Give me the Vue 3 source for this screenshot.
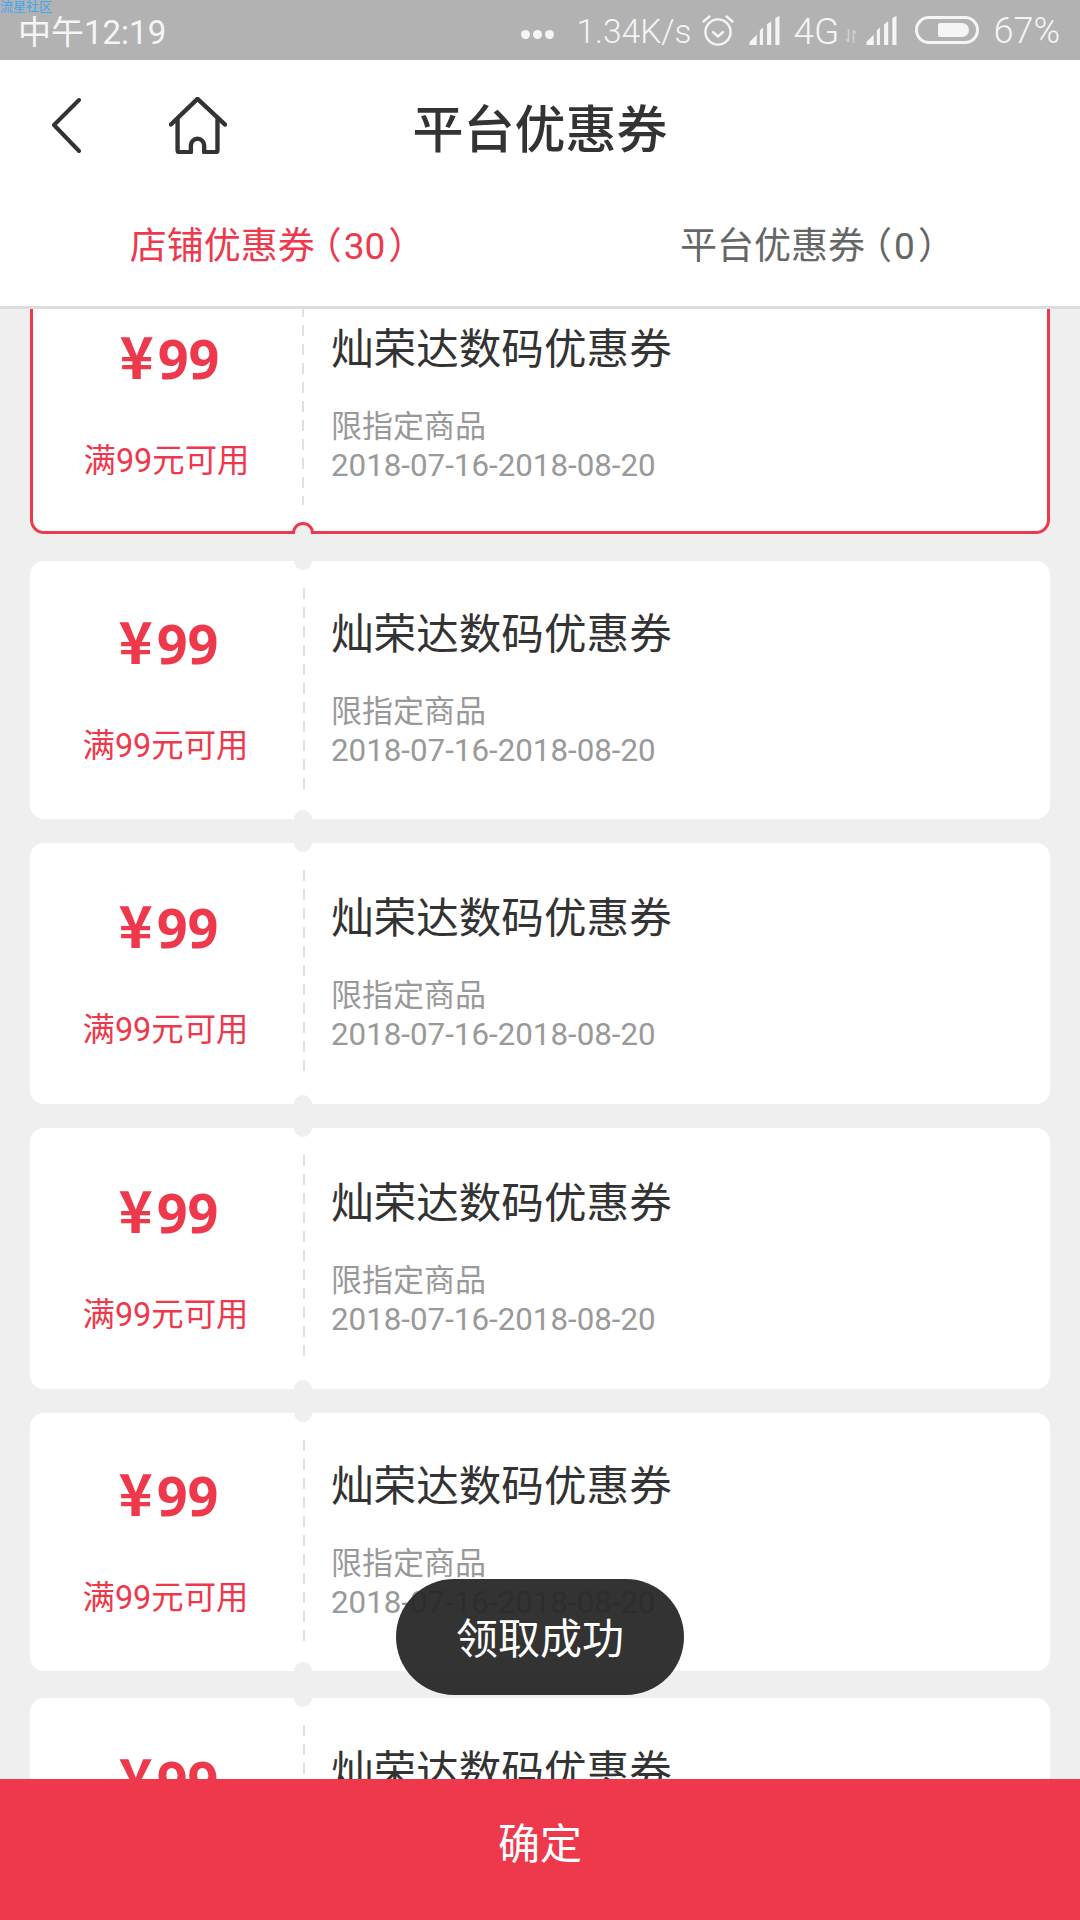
<template>
  <div class="page">
    <div class="status-bar">
      <span class="watermark">流星社区</span>
      <span class="clock">中午12:19</span>
      <div class="status-right">
        <span class="dots"><i></i><i></i><i></i></span>
        <span class="speed">1.34K/s</span>
        <svg class="alarm" width="34" height="34" viewBox="0 0 34 34" fill="none" stroke="#f5f5f5" stroke-width="2.4" stroke-linecap="round" stroke-linejoin="round">
          <circle cx="17" cy="19" r="12.6" />
          <path d="M12 19l5 4.500 5-4.500" />
          <path d="M2.500 8.500l6-5M31.500 8.500l-6-5" />
        </svg>
        <svg class="signal" width="34" height="29" viewBox="0 0 32 28" fill="#f5f5f5">
          <path d="M1 28v-3l7-7v10zM11 28V14l3-3v17zM18 28V8l4-3v23zM26 28V2l4-2v28z" />
        </svg>
        <span class="net">4G</span>
        <svg class="updown" width="12" height="14" viewBox="0 0 12 14" fill="none" stroke="#cfcfcf" stroke-width="1.600">
          <path d="M3.500 0v13M1 10l2.500 3M8.500 14V1M11 4L8.500 1" />
        </svg>
        <svg class="signal" width="34" height="29" viewBox="0 0 32 28" fill="#f5f5f5">
          <path d="M1 28v-3l7-7v10zM11 28V14l3-3v17zM18 28V8l4-3v23zM26 28V2l4-2v28z" />
        </svg>
        <span class="battery"><b></b></span>
        <span class="percent">67%</span>
      </div>
    </div>

    <div class="header">
      <svg class="back" width="30" height="60" viewBox="0 0 30 60" fill="none" stroke="#333" stroke-width="4" stroke-linecap="round" stroke-linejoin="round">
        <path d="M28 4L3 29l25 26" />
      </svg>
      <svg class="home" width="58" height="57" viewBox="0 0 61 60" fill="none" stroke="#333" stroke-width="4.600" stroke-linecap="round" stroke-linejoin="round">
        <path d="M2 29L30 2l29 27" />
        <path d="M9 24v32a2 2 0 0 0 2 2h12v-7a7 7 0 0 1 14 0v7h12a2 2 0 0 0 2-2V24" />
      </svg>
      <h1 class="title">平台优惠券</h1>
    </div>

    <div class="tabs">
      <div v-for="tab in tabs" :key="tab.name" class="tab" :class="{ active: tab.active }">
        {{ tab.name }}<span class="paren">（</span><span class="count">{{ tab.count }}</span>）
      </div>
    </div>

    <div class="list">
      <div class="scroller">
        <div
          v-for="(coupon, i) in coupons"
          :key="i"
          class="coupon"
          :class="{ selected: coupon.selected }"
          :style="{ height: coupon.height + 'px', marginTop: coupon.top + 'px' }"
        >
          <span class="notch notch-top"></span>
          <span class="notch notch-bottom"></span>
          <div class="coupon-left">
            <div class="price"><span class="yen">¥</span>99</div>
            <div class="limit">满99元可用</div>
          </div>
          <div class="coupon-right">
            <div class="name">灿荣达数码优惠券</div>
            <div class="scope">限指定商品</div>
            <div class="date">2018-07-16-2018-08-20</div>
          </div>
        </div>
      </div>
    </div>

    <div class="confirm">确定</div>
    <div class="toast">领取成功</div>
  </div>
</template>

<script setup>
const tabs = [
  { name: '店铺优惠券', count: 30, active: true },
  { name: '平台优惠券', count: 0, active: false }
]

// list is scrolled a little, the first coupon starts under the tabs
const coupons = [
  { height: 258, top: -33, selected: true },
  { height: 258, top: 27 },
  { height: 261, top: 24 },
  { height: 261, top: 24 },
  { height: 258, top: 24 },
  { height: 258, top: 27 }
]
</script>

<style>
html,
body {
  margin: 0;
  background: #efefef;
}
</style>

<style scoped>
.page {
  position: relative;
  width: 1080px;
  height: 1920px;
  display: flex;
  flex-direction: column;
  overflow: hidden;
  background: #efefef;
  font-family: Roboto, "Noto Sans CJK SC", sans-serif;
}

/* status bar */
.status-bar {
  position: relative;
  flex: none;
  height: 60px;
  padding: 0 20px 0 18px;
  box-sizing: border-box;
  display: flex;
  align-items: center;
  justify-content: space-between;
  background: #b2b2b2;
  color: #f5f5f5;
  font-size: 33px;
}

.watermark {
  position: absolute;
  left: 0;
  top: 0;
  font-size: 13px;
  line-height: 13px;
  color: #3ba7f5;
}

.status-right {
  display: flex;
  align-items: center;
  font-size: 33.500px;
  font-weight: 300;
}

.dots {
  display: flex;
  gap: 3px;
  margin-top: 8px;
  margin-right: 22px;
}

.dots i {
  width: 9px;
  height: 9px;
  border-radius: 50%;
  background: #f5f5f5;
}

.speed {
  margin-top: 2px;
  margin-right: 9px;
}

.alarm {
  margin-right: 13px;
}

.net {
  margin-top: 2px;
  margin-left: 12px;
  font-size: 37px;
}

.updown {
  margin: 12px 8px 0 6px;
}

.battery {
  width: 64px;
  height: 28px;
  margin-left: 16px;
  margin-right: 14px;
  padding: 4px 7px 4px 20px;
  box-sizing: border-box;
  border: 3px solid #f5f5f5;
  border-radius: 14px;
  display: flex;
}

.battery b {
  flex: 1;
  border-radius: 2px 7px 7px 2px;
  background: #f5f5f5;
}

.percent {
  margin-top: 2px;
  font-size: 36px;
}

/* header */
.header {
  position: relative;
  flex: none;
  height: 136px;
  display: flex;
  align-items: center;
  justify-content: center;
  background: #fff;
}

.back {
  position: absolute;
  left: 51px;
  top: 36px;
}

.home {
  position: absolute;
  left: 169px;
  top: 37px;
}

.title {
  margin: 5px 0 0;
  font-size: 51px;
  line-height: 60px;
  font-weight: 500;
  color: #333;
}

/* tabs */
.tabs {
  flex: none;
  height: 113px;
  box-sizing: border-box;
  padding-bottom: 9px;
  display: flex;
  align-items: center;
  background: #fff;
  border-bottom: 3px solid #ddd;
}

.tab {
  flex: 1;
  padding-left: 15px;
  text-align: center;
  font-size: 37px;
  line-height: 50px;
  color: #666;
}

.tab.active {
  color: #ee394c;
}

.paren {
  margin-left: -10px;
}

.count {
  margin: 0 3px 0 2px;
}

/* coupons */
.list {
  flex: 1;
  min-height: 0;
  overflow: hidden;
}

.scroller {
  padding: 0 30px;
  display: flex;
  flex-direction: column;
}

.coupon {
  position: relative;
  flex: none;
  display: flex;
  box-sizing: border-box;
  border-radius: 14px;
  background: #fff;
}

.coupon.selected {
  border: 3px solid #ee394c;
}

.notch {
  position: absolute;
  left: 264px;
  width: 18px;
  height: 18px;
  border-radius: 50%;
  background: #efefef;
}

.notch-top {
  top: -9px;
}

.notch-bottom {
  bottom: -9px;
}

.selected .notch {
  left: 259px;
}

.selected .notch-bottom {
  bottom: -13px;
  width: 22px;
  height: 22px;
  box-sizing: border-box;
  border: 3px solid #ee394c;
  clip-path: inset(0 0 45% 0);
}

.coupon-left {
  position: relative;
  flex: none;
  width: 273px;
  padding-bottom: 10px;
  box-sizing: border-box;
  display: flex;
  flex-direction: column;
  align-items: center;
  justify-content: center;
}

/* dashed line between the two halves */
.coupon-left::after {
  content: "";
  position: absolute;
  right: -2px;
  top: 27px;
  bottom: 26px;
  width: 2px;
  background: repeating-linear-gradient(to bottom, #e0e0e0 0 11px, transparent 11px 19px);
}

.selected .coupon-left {
  width: 269px;
}

.price {
  padding-left: 4px;
  font-family: "Noto Sans", "Noto Sans CJK SC", sans-serif;
  font-size: 54px;
  line-height: 70px;
  font-weight: 700;
  color: #ee394c;
}

.yen {
  margin-right: 4px;
  font-family: "Noto Sans CJK SC", sans-serif;
  font-size: 58px;
}

.limit {
  margin-top: 48px;
  margin-right: 2px;
  font-size: 32.400px;
  line-height: 40px;
  color: #ee394c;
}

.coupon-right {
  flex: 1;
  display: flex;
  flex-direction: column;
  justify-content: center;
  padding-left: 28px;
  padding-bottom: 5px;
}

.selected .coupon-right {
  padding-left: 29px;
}

.name {
  font-size: 42.600px;
  line-height: 60px;
  color: #333;
}

.scope {
  margin-top: 28px;
  font-size: 31px;
  line-height: 40px;
  color: #999;
}

.date {
  margin-top: -1px;
  font-size: 31.300px;
  line-height: 40px;
  color: #999;
}

/* bottom */
.confirm {
  position: relative;
  flex: none;
  height: 141px;
  padding-bottom: 19px;
  box-sizing: border-box;
  display: flex;
  align-items: center;
  justify-content: center;
  background: #ee394c;
  color: #fff;
  font-size: 42px;
}

.toast {
  position: absolute;
  left: 396px;
  top: 1579px;
  width: 288px;
  height: 116px;
  padding-bottom: 4px;
  box-sizing: border-box;
  border-radius: 58px;
  display: flex;
  align-items: center;
  justify-content: center;
  background: rgba(38, 38, 38, 0.94);
  color: #fff;
  font-size: 42px;
}
</style>
